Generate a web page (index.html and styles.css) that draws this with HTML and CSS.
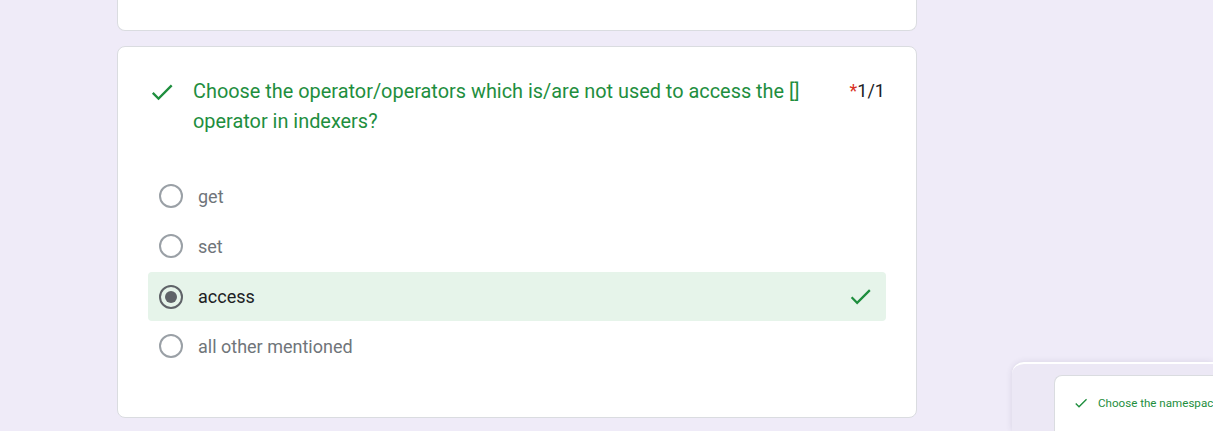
FILE: index.html
```html
<!DOCTYPE html>
<html lang="en">
<head>
<meta charset="utf-8">
<title>Quiz</title>
<link rel="stylesheet" href="styles.css">
</head>
<body>
<div class="page">
  <div class="card card-prev"></div>
  <div class="card card-question">
    <div class="q-header">
      <svg class="q-check" width="28" height="28" viewBox="0 0 24 24"><path d="M9 16.2 4.8 12l-1.4 1.4L9 19 21 7l-1.4-1.4z" fill="#1e8e3e"/></svg>
      <div class="q-title">Choose the operator/operators which is/are not used to access the [] operator in indexers?</div>
      <div class="q-points"><span class="req">*</span>1/1</div>
    </div>
    <div class="options">
      <div class="option"><span class="radio"></span><span class="opt-text">get</span></div>
      <div class="option"><span class="radio"></span><span class="opt-text">set</span></div>
      <div class="option option-correct"><span class="radio radio-on"></span><span class="opt-text">access</span>
        <svg class="opt-check" width="27" height="27" viewBox="0 0 24 24"><path d="M9 16.2 4.8 12l-1.4 1.4L9 19 21 7l-1.4-1.4z" fill="#1e8e3e"/></svg>
      </div>
      <div class="option"><span class="radio"></span><span class="opt-text">all other mentioned</span></div>
    </div>
  </div>
</div>
<div class="preview">
  <div class="preview-card">
    <svg class="preview-check" width="16" height="16" viewBox="0 0 24 24"><path d="M9 16.2 4.8 12l-1.4 1.4L9 19 21 7l-1.4-1.4z" fill="#1e8e3e"/></svg>
    <span>Choose the namespace</span>
  </div>
</div>
</body>
</html>
```

FILE: styles.css
```css
* { box-sizing: border-box; }
html, body {
  margin: 0;
  padding: 0;
  background: #efebf8;
  font-family: Roboto, "Liberation Sans", Arial, sans-serif;
  overflow: hidden;
  height: 431px;
}
.page {
  width: 800px;
  margin-left: 117px;
  display: flex;
  flex-direction: column;
  gap: 15px;
}
.card {
  background: #fff;
  border: 1px solid #dadce0;
  border-radius: 8px;
}
.card-prev {
  height: 31px;
  border-top: none;
  border-radius: 0 0 8px 8px;
}
.card-question {
  height: 372px;
  padding: 30px 30px 0 30px;
}
.q-header {
  display: flex;
  align-items: flex-start;
  padding-left: 0;
  font-size: 18px;
  line-height: 30px;
}
.q-check {
  flex: none;
  margin-top: 1px;
  margin-right: 17px;
}
.q-title {
  flex: 1;
  color: #1e8e3e;
  font-size: 19.9px;
  padding-right: 30px;
}
.q-points {
  flex: none;
  color: #202124;
  margin-top: -1px;
  padding-right: 1px;
}
.req { color: #d93025; }
.options {
  margin-top: 34px;
  display: flex;
  flex-direction: column;
}
.option {
  height: 50px;
  display: flex;
  align-items: center;
  padding-left: 11px;
  padding-right: 12px;
  border-radius: 4px;
  font-size: 18px;
  color: #70757a;
}
.option-correct {
  background: #e6f4ea;
  color: #202124;
  height: 49px;
  margin: 1px 0 0 0;
}
.radio {
  flex: none;
  width: 24px;
  height: 24px;
  border: 2px solid #9aa0a6;
  border-radius: 50%;
  margin-right: 15px;
  display: flex;
  align-items: center;
  justify-content: center;
}
.radio-on { border-color: #5f6368; }
.radio-on::after {
  content: "";
  width: 12px;
  height: 12px;
  border-radius: 50%;
  background: #5f6368;
}
.opt-text { flex: 1; }
.opt-check { flex: none; }
.preview {
  position: absolute;
  left: 1012px;
  top: 362px;
  width: 201px;
  height: 69px;
  background: #ece8f5;
  border-top-left-radius: 12px;
  box-shadow: 0 0 6px rgba(60, 50, 90, 0.12);
  border-top: 2px solid #fff;
}
.preview-card {
  position: absolute;
  left: 42px;
  top: 11px;
  width: 159px;
  height: 56px;
  overflow: hidden;
  background: #fff;
  border: 1px solid #dadce0;
  border-right: none;
  border-bottom: none;
  border-top-left-radius: 8px;
  display: flex;
  align-items: flex-start;
  gap: 9px;
  padding: 19px 0 0 18px;
  font-size: 11.6px;
  color: #1e8e3e;
  white-space: nowrap;
}
.preview-check { flex: none; }
.preview-card span { line-height: 16px; }
```
